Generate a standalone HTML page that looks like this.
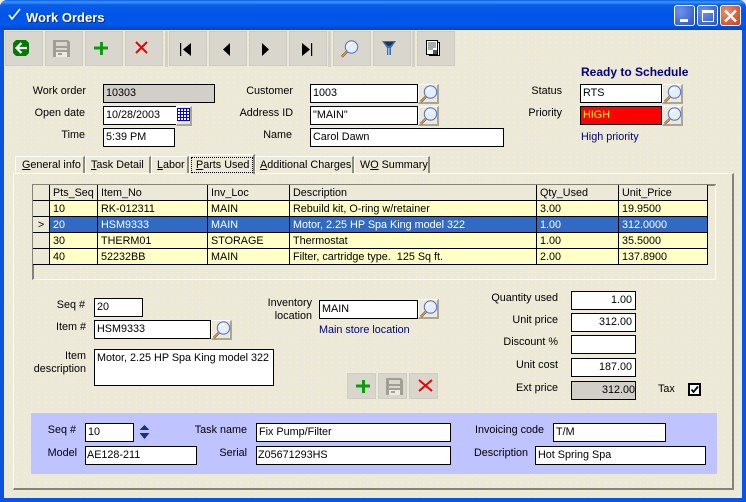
<!DOCTYPE html>
<html><head><meta charset="utf-8"><title>Work Orders</title>
<style>
html,body{margin:0;padding:0}
body{width:746px;height:502px;position:relative;overflow:hidden;background-color:#ece9d8;background-image:radial-gradient(#f7f3c6 .6px,transparent .9px);background-size:7px 5px;font:10.8px/16px "Liberation Sans",sans-serif;color:#000}
div,span.a{box-sizing:border-box}
.t{position:absolute;left:0;top:0;width:746px;height:30px;background:linear-gradient(#0a5be0 0,#3d95ff 2px,#0a5ce8 5px,#0055e5 16px,#0058ee 24px,#0046c8 30px);border-radius:7px 7px 0 0}
.title{position:absolute;left:26px;top:10px;color:#fff;font-weight:bold;font-size:13px;text-shadow:1px 1px 0 #0a2a8a}
.bl{position:absolute;background:#0a55e0}
.w{position:absolute;top:5px;width:21px;height:21px;border:1px solid #fff;border-radius:3px;background:radial-gradient(circle at 30% 30%,#6f93ea,#2a51c8)}
.tb{position:absolute;top:31px;width:38px;height:35px;background:#d9d6ce;border:1px solid #cfccc4}
.sb{position:absolute;top:373px;width:29px;height:26px;background:#d9d6ce;border:1px solid #cfccc4}
.sep{position:absolute;top:31px;width:3px;height:36px;background:#d3d0c7}
.l{position:absolute;white-space:nowrap;text-align:right}
.f{position:absolute;height:19px;border:1px solid #000;background:#fff;padding-left:2px;line-height:17px;white-space:nowrap;overflow:hidden}
.r{text-align:right;padding:0 3px 0 0}
.gr{background:#d2cfc9}
.m{position:absolute;width:21px;height:20px;background:#ece9d8;border-top:1px solid #fff;border-left:1px solid #fff;border-right:2px solid #a8a59b;border-bottom:2px solid #a8a59b}
.n{position:absolute;color:#000080;white-space:nowrap}
.tab{position:absolute;top:156px;height:17px;border-top:1px solid #fff;border-left:1px solid #fff;border-right:2px solid #8c897f;white-space:nowrap;line-height:16px}
.panel{position:absolute;left:13px;top:173px;width:721px;height:317px;border-top:1px solid #fff;border-left:1px solid #fff;border-right:2px solid #85827a;border-bottom:2px solid #85827a}
.gridbox{position:absolute;left:32px;top:184px;width:684px;height:96px;border-top:2px solid #85827a;border-left:2px solid #85827a;border-right:1px solid #fff;border-bottom:1px solid #fff}
table{position:absolute;left:33px;top:185px;border-collapse:separate;border-spacing:0;table-layout:fixed;width:675px}
td{height:16px;box-sizing:border-box;padding:1px 0 0 3px;border-right:1px solid #000;border-bottom:1px solid #000;background:#ffffc6;line-height:14px;white-space:nowrap;overflow:hidden}
tr.h td,td.i{background:#ece9d8}
tr.s td{background:#316ac5;color:#fff}
tr.s td.i{background:#ece9d8;color:#000;text-align:center;padding:1px 0 0}
.bp{position:absolute;left:31px;top:413px;width:686px;height:61px;background:#bfc3ff}
svg.o{position:absolute;left:0;top:0}
</style></head><body>
<div class="t"></div>
<div class="bl" style="left:0;top:30px;width:4px;height:472px"></div>
<div class="bl" style="left:742px;top:30px;width:4px;height:472px"></div>
<div class="bl" style="left:0;top:498px;width:746px;height:4px"></div>
<div class="title">Work Orders</div>
<div class="w" style="left:674px"></div>
<div class="w" style="left:697px"></div>
<div class="w" style="left:720px;background:radial-gradient(circle at 30% 30%,#ea8f70,#c8401c)"></div>

<div class="tb" style="left:5px"></div><div class="tb" style="left:45px"></div><div class="tb" style="left:85px"></div><div class="tb" style="left:125px"></div>
<div class="sep" style="left:165px"></div>
<div class="tb" style="left:169px"></div><div class="tb" style="left:209px"></div><div class="tb" style="left:249px"></div><div class="tb" style="left:289px"></div>
<div class="sep" style="left:328px"></div>
<div class="tb" style="left:333px"></div><div class="tb" style="left:373px"></div>
<div class="sep" style="left:412px"></div>
<div class="tb" style="left:417px"></div>

<div class="l" style="right:660px;top:83px">Work order</div>
<div class="l" style="right:661px;top:105px">Open date</div>
<div class="l" style="right:661px;top:127px">Time</div>
<div class="f gr" style="left:103px;top:84px;width:112px">10303</div>
<div class="f" style="left:103px;top:106px;width:74px">10/28/2003</div>
<div class="f" style="left:103px;top:128px;width:72px">5:39 PM</div>
<div class="m" style="left:176px;top:106px;width:16px"></div>

<div class="l" style="right:453px;top:83px">Customer</div>
<div class="l" style="right:453px;top:105px">Address ID</div>
<div class="l" style="right:454px;top:127px">Name</div>
<div class="f" style="left:310px;top:84px;width:108px">1003</div>
<div class="f" style="left:310px;top:106px;width:108px">"MAIN"</div>
<div class="f" style="left:310px;top:128px;width:194px">Carol Dawn</div>
<div class="m" style="left:418px;top:84px"></div>
<div class="m" style="left:418px;top:106px"></div>

<div class="n" style="left:581px;top:64px;font-weight:bold;font-size:12px">Ready to Schedule</div>
<div class="l" style="right:184px;top:83px">Status</div>
<div class="l" style="right:184px;top:105px">Priority</div>
<div class="f" style="left:580px;top:84px;width:82px">RTS</div>
<div class="f" style="left:580px;top:106px;width:82px;background:#f00;color:#ff0">HIGH</div>
<div class="m" style="left:662px;top:84px"></div>
<div class="m" style="left:662px;top:106px"></div>
<div class="n" style="left:581px;top:129px">High priority</div>

<div class="panel"></div>
<div class="tab" style="left:15px;width:70px;padding-left:6px"><u>G</u>eneral info</div>
<div class="tab" style="left:85px;width:66px;padding-left:5px"><u>T</u>ask Detail</div>
<div class="tab" style="left:151px;width:38px;padding-left:5px"><u>L</u>abor</div>
<div class="tab" style="left:189px;top:154px;height:20px;width:66px;padding:2px 0 0 1px;background:#ece9d8;line-height:15px"><div style="border:1px dotted #000;height:16px;width:62px;padding-left:4px"><u>P</u>arts Used</div></div>
<div class="tab" style="left:255px;width:99px;padding-left:4px"><u>A</u>dditional Charges</div>
<div class="tab" style="left:354px;width:76px;padding-left:5px">W<u>O</u> Summary</div>

<div class="gridbox"></div>
<table><colgroup><col style="width:17px"><col style="width:48px"><col style="width:110px"><col style="width:82px"><col style="width:247px"><col style="width:82px"><col style="width:89px"></colgroup>
<tr class="h"><td></td><td>Pts_Seq</td><td>Item_No</td><td>Inv_Loc</td><td>Description</td><td>Qty_Used</td><td>Unit_Price</td></tr>
<tr><td class="i"></td><td>10</td><td>RK-012311</td><td>MAIN</td><td>Rebuild kit, O-ring w/retainer</td><td>3.00</td><td>19.9500</td></tr>
<tr class="s"><td class="i">&gt;</td><td>20</td><td>HSM9333</td><td>MAIN</td><td>Motor, 2.25 HP Spa King model 322</td><td>1.00</td><td>312.0000</td></tr>
<tr><td class="i"></td><td>30</td><td>THERM01</td><td>STORAGE</td><td>Thermostat</td><td>1.00</td><td>35.5000</td></tr>
<tr><td class="i"></td><td>40</td><td>52232BB</td><td>MAIN</td><td>Filter, cartridge type.&nbsp; 125 Sq ft.</td><td>2.00</td><td>137.8900</td></tr>
</table>

<div class="l" style="right:661px;top:297px">Seq #</div>
<div class="l" style="right:660px;top:319px">Item #</div>
<div class="l" style="right:660px;top:350px;line-height:13px">Item<br>description</div>
<div class="f" style="left:94px;top:298px;width:49px">20</div>
<div class="f" style="left:94px;top:320px;width:117px">HSM9333</div>
<div class="m" style="left:211px;top:320px"></div>
<div class="f" style="left:94px;top:349px;width:180px;height:37px;white-space:normal">Motor, 2.25 HP Spa King model 322</div>

<div class="l" style="right:434px;top:297px;line-height:13px">Inventory<br>location</div>
<div class="f" style="left:319px;top:300px;width:99px">MAIN</div>
<div class="m" style="left:418px;top:299px"></div>
<div class="n" style="left:319px;top:322px">Main store location</div>

<div class="l" style="right:188px;top:290px">Quantity used</div>
<div class="l" style="right:188px;top:312px">Unit price</div>
<div class="l" style="right:188px;top:334px">Discount %</div>
<div class="l" style="right:188px;top:357px">Unit cost</div>
<div class="l" style="right:188px;top:380px">Ext price</div>
<div class="f r" style="left:571px;top:291px;width:65px">1.00</div>
<div class="f r" style="left:571px;top:313px;width:65px">312.00</div>
<div class="f r" style="left:571px;top:335px;width:65px"></div>
<div class="f r" style="left:571px;top:358px;width:65px">187.00</div>
<div class="f r gr" style="left:571px;top:381px;width:65px;padding-right:0">312.00</div>
<div class="l" style="left:658px;top:381px">Tax</div>

<div class="sb" style="left:347px"></div><div class="sb" style="left:378px"></div><div class="sb" style="left:409px"></div>

<div class="bp"></div>
<div class="l" style="right:670px;top:422px">Seq #</div>
<div class="l" style="right:669px;top:445px">Model</div>
<div class="l" style="right:499px;top:422px">Task name</div>
<div class="l" style="right:499px;top:445px">Serial</div>
<div class="l" style="right:202px;top:422px">Invoicing code</div>
<div class="l" style="right:218px;top:445px">Description</div>
<div class="f" style="left:85px;top:423px;width:49px">10</div>
<div class="f" style="left:85px;top:446px;width:112px;padding-left:1px">AE128-211</div>
<div class="f" style="left:256px;top:423px;width:195px">Fix Pump/Filter</div>
<div class="f" style="left:256px;top:446px;width:195px;padding-left:1px">Z05671293HS</div>
<div class="f" style="left:553px;top:423px;width:113px">T/M</div>
<div class="f" style="left:535px;top:446px;width:171px;padding-left:2px">Hot Spring Spa</div>

<svg class="o" width="746" height="502" viewBox="0 0 746 502">
<defs>
<g id="mag"><circle cx="11.500" cy="8" r="6.200" fill="#e4eeff" stroke="#5a78c0" stroke-width="1.100"/><path d="M8 7a4 4 0 0 1 4-3" fill="none" stroke="#fff" stroke-width="1.400"/><path d="M6.800 12.800L1.800 17.800" stroke="#5a4a30" stroke-width="2.400"/><path d="M6.800 12.800L1.800 17.800" stroke="#f0a858" stroke-width="1.100"/></g>
<g id="save"><path d="M0 0H15L17 2V17H0Z" fill="#a09f96"/><rect x="3" y="2" width="11" height="4" fill="#d9d6ce"/><rect x="3" y="8" width="11" height="2" fill="#d9d6ce"/><rect x="3" y="12" width="11" height="5" fill="#eceae2"/><rect x="5" y="13" width="4" height="2" fill="#a09f96"/></g>
</defs>
<path d="M9 15L12 19L20 9" fill="none" stroke="#fff" stroke-width="1.600"/>
<rect x="680" y="19" width="8" height="3" fill="#fff"/>
<rect x="702.500" y="10.500" width="11" height="11" fill="none" stroke="#fff"/><rect x="702" y="10" width="12" height="3" fill="#fff"/>
<path d="M725 10.500L736 21.500M736 10.500L725 21.500" stroke="#fff" stroke-width="2.400"/>
<path d="M16 40H26L29 43V53L26 56H16L13 53V43Z" fill="#007a00"/>
<path d="M27 48H17M21.500 43L16.500 48L21.500 53" fill="none" stroke="#fff" stroke-width="2.200"/>
<use href="#save" x="53" y="40"/>
<path d="M94 46.500H108V49.500H103V55H100V49.500H94ZM100 42H103V47H100Z" fill="#109a10"/>
<path d="M136 42L147 53M147 42L136 53" stroke="#f00000" stroke-width="2"/>
<rect x="180" y="43" width="1.200" height="13" fill="#000"/><path d="M191 43V56L183 49.500Z" fill="#000"/>
<path d="M230 43V56L223 49.500Z" fill="#000"/>
<path d="M262 43V56L269 49.500Z" fill="#000"/>
<path d="M302 43V56L310 49.500Z" fill="#000"/><rect x="311" y="43" width="1.200" height="13" fill="#000"/>
<use href="#mag" x="340" y="39"/>
<path d="M382 41H396L391 48V55H387V48Z" fill="#3f6fa8"/><path d="M384 42H394L390 46H388Z" fill="#16365f"/><rect x="388" y="48" width="1.500" height="7" fill="#9cc0e8"/>
<rect x="429.500" y="42.500" width="10" height="13" fill="#fff" stroke="#000"/><rect x="426.500" y="40.500" width="11" height="14" fill="#fff" stroke="#000"/>
<path d="M428 43H436M428 45H436M428 47H436M428 49H433" stroke="#555"/><rect x="433" y="50" width="4" height="4" fill="#555"/>
<rect x="177.500" y="108.500" width="12" height="12" fill="#fff" stroke="#00f"/>
<path d="M180.500 108V121M183.500 108V121M186.500 108V121M177 111.500H190M177 114.500H190M177 117.500H190" stroke="#00f"/>
<use href="#mag" x="419" y="84"/><use href="#mag" x="419" y="106"/>
<use href="#mag" x="663" y="84"/><use href="#mag" x="663" y="106"/>
<use href="#mag" x="212" y="320"/><use href="#mag" x="419" y="299"/>
<path d="M356 384.500H370V387.500H365V393H362V387.500H356ZM362 380H365V385H362Z" fill="#109a10"/>
<use href="#save" x="386" y="378"/>
<path d="M419 380L432 391M432 380L419 391" stroke="#f00000" stroke-width="2"/>
<rect x="689" y="384" width="11" height="11" fill="#fff" stroke="#000" stroke-width="2"/>
<path d="M691.500 389.500L693.500 392L698 386.500" fill="none" stroke="#000" stroke-width="1.800"/>
<path d="M144.500 425L149.500 430H139.500ZM139.500 433H149.500L144.500 439Z" fill="#1a2a90"/>
</svg>
</body></html>
